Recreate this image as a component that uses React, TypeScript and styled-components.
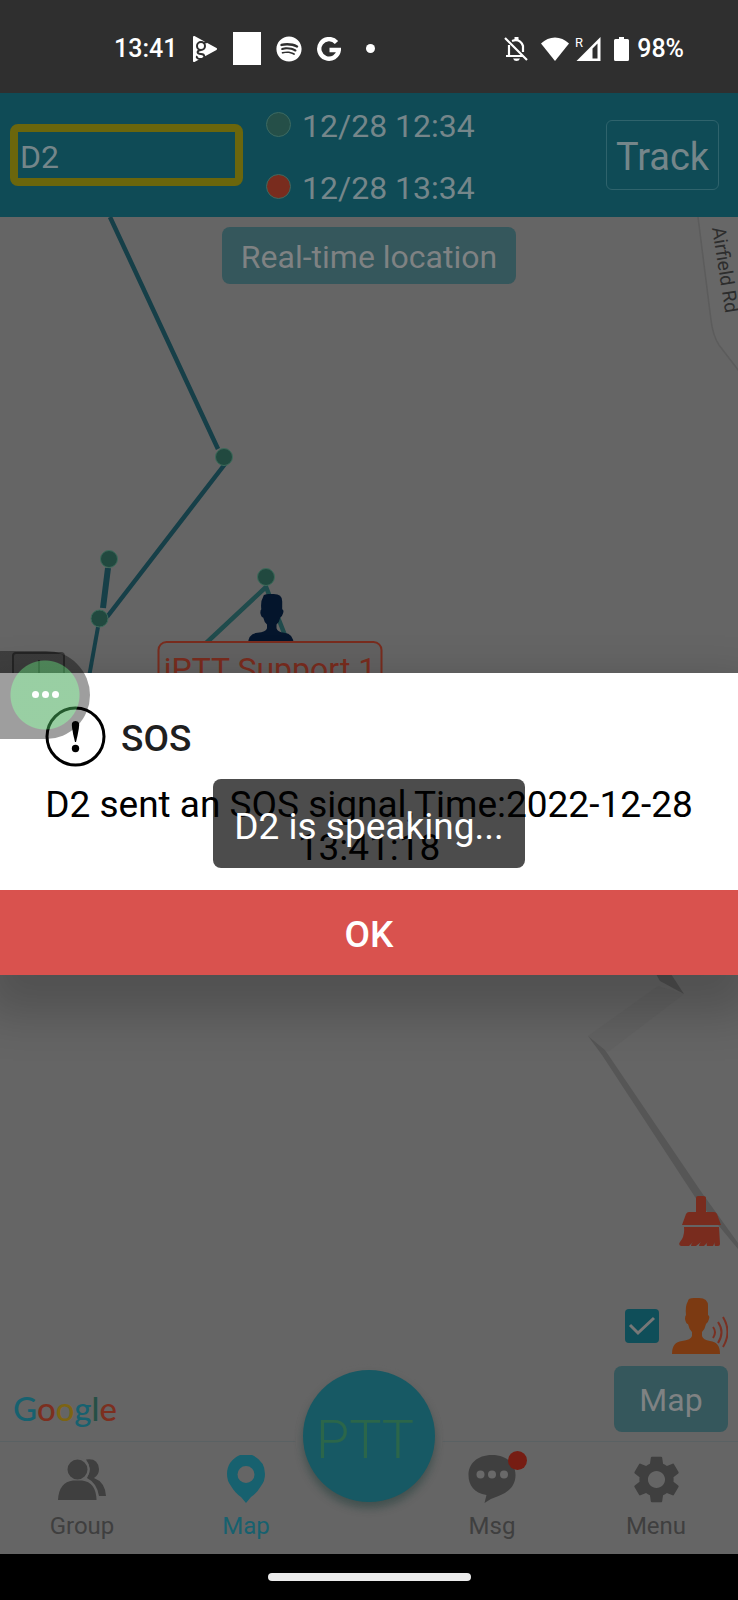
import React from 'react';
import styled, { createGlobalStyle } from 'styled-components';
import { FaSpotify } from 'react-icons/fa';
import { MdSettings } from 'react-icons/md';

const color = {
  map: '#656565',
  header: '#0f4b56',
  headerText: '#75868a',
  track: '#163f48',
  node: '#21493f',
  accent: '#17616f',
  grey: '#3f3f3f',
  red: '#792c1e',
};

const GlobalStyle = createGlobalStyle`
  * { box-sizing: border-box; }
  body { margin: 0; background: #000; font-family: Roboto, "Liberation Sans", sans-serif; }
  button, input { font: inherit; margin: 0; }
  button { padding: 0; border: 0; background: none; cursor: pointer; }
`;

const Page = styled.div`
  display: flex;
  flex-direction: column;
  min-height: 100vh;
`;

/* ---------- status bar ---------- */
const StatusBar = styled.div`
  display: flex;
  align-items: center;
  justify-content: space-between;
  height: 93px;
  padding: 4px 54px 0 114px;
  background: #2f2f2f;
  color: #fff;
  font-size: 25px;
  font-weight: 500;
`;

const StatusGroup = styled.div<{ $gap: number }>`
  display: flex;
  align-items: center;
  gap: ${(p) => p.$gap}px;

  svg { display: block; }
`;

const WhiteSquare = styled.span`
  width: 28px;
  height: 33px;
  background: #fff;
`;

const StatusDot = styled.span`
  width: 9px;
  height: 9px;
  margin-left: 10px;
  border-radius: 50%;
  background: #fff;
`;

const BatteryGroup = styled.span`
  display: flex;
  align-items: center;
  gap: 8px;
`;

/* ---------- header ---------- */
const Screen = styled.div`
  position: relative;
  display: flex;
  flex: 1;
  flex-direction: column;
`;

const Header = styled.header`
  display: flex;
  align-items: center;
  height: 124px;
  padding: 0 19px 0 10px;
  background: ${color.header};
  color: ${color.headerText};
`;

const UserInput = styled.input`
  width: 233px;
  height: 62px;
  padding: 3px 2px 0;
  border: 8px solid #6b660c;
  border-radius: 8px;
  outline: 0;
  background: transparent;
  color: inherit;
  font-size: 32px;
`;

const TimeList = styled.div`
  display: flex;
  flex: 1;
  flex-direction: column;
  margin-left: 23px;
`;

const TimeRow = styled.div`
  display: flex;
  align-items: center;
  gap: 11px;
  height: 62px;
  font-size: 32px;
  line-height: 38px;
`;

const TimeText = styled.time`
  padding-top: 3px;
`;

const TimeDot = styled.span<{ $fill: string }>`
  width: 25px;
  height: 25px;
  border: 1px solid #3c6a62;
  border-radius: 50%;
  background: ${(p) => p.$fill};
`;

const TrackButton = styled.button`
  width: 113px;
  height: 70px;
  padding-top: 4px;
  border: 1px solid #2f636c;
  border-radius: 6px;
  color: ${color.headerText};
  font-size: 38px;
`;

/* ---------- map ---------- */
const MapArea = styled.main`
  position: relative;
  display: flex;
  flex: 1;
  flex-direction: column;
  align-items: center;
  justify-content: space-between;
  min-height: 900px;
  overflow: hidden;
  background: ${color.map};
`;

const MapCanvas = styled.svg`
  position: absolute;
  inset: 0;
  width: 100%;
  height: 100%;
`;

const MapButton = styled.button<{ $size: 'wide' | 'small' }>`
  position: relative;
  width: ${(p) => (p.$size === 'wide' ? 294 : 114)}px;
  height: ${(p) => (p.$size === 'wide' ? 57 : 66)}px;
  margin-top: ${(p) => (p.$size === 'wide' ? 10 : 12)}px;
  padding-top: 2px;
  border-radius: 8px;
  background: #35575c;
  color: #7f8283;
  font-size: 32px;
`;

const MapFooter = styled.div`
  position: relative;
  display: flex;
  align-items: flex-end;
  justify-content: space-between;
  width: 100%;
  padding: 0 10px 9px 13px;
`;

const GoogleMark = styled.div`
  font-family: Lato, sans-serif;
  font-size: 33px;
  font-weight: 500;
  line-height: 48px;
`;

const Letter = styled.span<{ $c: string }>`
  color: ${(p) => p.$c};
`;

const Tools = styled.div`
  display: flex;
  flex-direction: column;
  align-items: flex-end;

  svg { display: block; }
`;

const BroomButton = styled.button`
  margin: 0 7px 52px 0;
`;

const VoiceRow = styled.label`
  display: flex;
  align-items: center;
  gap: 13px;
`;

const VoiceCheck = styled.input`
  appearance: none;
  width: 34px;
  height: 34px;
  border-radius: 4px;
  background: #0f4e59 url("data:image/svg+xml,%3Csvg xmlns='http://www.w3.org/2000/svg' viewBox='0 0 34 34'%3E%3Cpath d='M5 16l8 8L29 9' fill='none' stroke='%23777' stroke-width='3'/%3E%3C/svg%3E") center / cover;
`;

/* ---------- tab bar ---------- */
const TabBar = styled.nav`
  position: relative;
  display: flex;
  height: 113px;
  border-top: 1px solid #5a6163;
  background: ${color.map};
`;

const Tab = styled.button<{ $active?: boolean }>`
  display: flex;
  flex: 2;
  flex-direction: column;
  align-items: center;
  gap: 9px;
  padding-top: 13px;
  color: ${(p) => (p.$active ? color.accent : color.grey)};
  font-size: 24px;
  line-height: 28px;

  svg { display: block; flex-shrink: 0; }
`;

const TabIcon = styled.span`
  position: relative;
  display: flex;
  align-items: center;
  justify-content: center;
  width: 48px;
  height: 48px;
`;

const Badge = styled.span`
  position: absolute;
  top: -4px;
  right: -11px;
  width: 19px;
  height: 19px;
  border-radius: 50%;
  background: #761d13;
`;

const TabSpacer = styled.div`
  flex: 1;
`;

const PttRing = styled.div`
  position: absolute;
  top: -78px;
  left: 50%;
  padding: 6px 8px;
  border-radius: 50%;
  background: ${color.map};
  transform: translateX(-50%);
`;

const PttButton = styled.button`
  display: block;
  width: 132px;
  height: 132px;
  padding: 6px 8px 0 0;
  border-radius: 50%;
  background: #175964;
  box-shadow: 0 6px 8px rgba(10, 50, 45, 0.4);
  color: #2b664a;
  font-size: 54px;
  font-weight: 300;
`;

const HomeBar = styled.div`
  display: flex;
  align-items: center;
  justify-content: center;
  height: 46px;
  background: #000;

  &::after {
    width: 203px;
    height: 8px;
    border-radius: 4px;
    background: #ebebeb;
    content: '';
  }
`;

/* ---------- overlays ---------- */
const Overlay = styled.div`
  position: absolute;
  inset: 0;
  display: flex;
  align-items: center;
  overflow: hidden;
`;

const Dialog = styled.section`
  width: 100%;
  background: #fff;
  box-shadow: 0 24px 44px 16px rgba(0, 0, 0, 0.2);
`;

const DialogBody = styled.div`
  padding: 34px 40px 21px;
`;

const DialogTitle = styled.h2`
  display: flex;
  align-items: center;
  gap: 15px;
  height: 60px;
  margin: 0 0 16px;
  padding-left: 5px;
  color: #1f1f1f;
  font-size: 37px;
  font-weight: 500;
`;

const TitleText = styled.span`
  padding-top: 4px;
`;

const DialogText = styled.p`
  margin: 0;
  color: #000;
  font-size: 37px;
  line-height: 43px;
  text-align: center;
`;

const OkButton = styled.button`
  display: block;
  width: 100%;
  height: 85px;
  padding-top: 4px;
  background: #d9524e;
  color: #fff;
  font-size: 37px;
  font-weight: 500;
`;

const ToastLayer = styled(Overlay)`
  justify-content: center;
  pointer-events: none;
`;

const Toast = styled.div`
  padding: 26px 21px 20px;
  border-radius: 8px;
  background: rgba(0, 0, 0, 0.7);
  color: #fff;
  font-size: 37px;
  line-height: 43px;
`;

const Bubble = styled.button`
  position: absolute;
  top: calc(50% - 173px);
  left: 0;
  display: flex;
  align-items: center;
  gap: 3px;
  width: 90px;
  height: 88px;
  padding-left: 32px;
  border-radius: 0 44px 44px 0;
  background: radial-gradient(
    circle at 45px 44px,
    rgba(66, 166, 85, 0.54) 34px,
    rgba(0, 0, 0, 0.38) 35px
  );
`;

const BubbleDot = styled.span`
  width: 7px;
  height: 7px;
  border-radius: 50%;
  background: #fff;
`;

/* ---------- icons ---------- */
const PlayGamesIcon = () => (
  <svg width="26" height="28" viewBox="0 0 26 28" aria-hidden="true">
    <path d="M2 2l22 12L2 26z" fill="#fff" stroke="#fff" strokeWidth="2" strokeLinejoin="round" />
    <circle cx="9" cy="11" r="4" fill="none" stroke="#2f2f2f" strokeWidth="2" />
    <path d="M9 15c-5 1-4 4 0 4s5 5 0 5c-3 0-5-1-4-3M11 8l4-1" fill="none" stroke="#2f2f2f" strokeWidth="2" />
  </svg>
);

const GIcon = () => (
  <svg width="24" height="24" viewBox="0 0 24 24" aria-hidden="true">
    <path d="M19.5 5.5A9.8 9.8 0 1 0 21.8 13H12.5" fill="none" stroke="#fff" strokeWidth="4.4" />
  </svg>
);

const BellOffIcon = () => (
  <svg width="24" height="25" viewBox="0 0 24 25" fill="none" stroke="#fff" strokeWidth="2.2" aria-hidden="true">
    <path d="M1 2l22 22M8 5q8-3 11 5v6M5 9v10M2 20h17" />
    <path d="M12.500 4V1" strokeWidth="4" />
    <path d="M9 22.500h7q-1 2.500-3.500 2.500T9 22.500z" fill="#fff" stroke="none" />
  </svg>
);

const WifiIcon = () => (
  <svg width="28" height="24" viewBox="0 0 28 24" aria-hidden="true">
    <path d="M0 6.500C8-1.500 20-1.500 28 6.500L14 24z" fill="#fff" />
  </svg>
);

const SignalIcon = () => (
  <svg width="26" height="26" viewBox="0 0 26 26" aria-hidden="true">
    <path d="M1.500 25L25.500 1v24zM17.500 12.500V22.500h5V7.500z" fill="#fff" fillRule="evenodd" />
    <text x="0" y="11" fontSize="13" fontWeight="400" fill="#fff">R</text>
  </svg>
);

const BatteryIcon = () => (
  <svg width="15" height="24" viewBox="0 0 15 24" aria-hidden="true">
    <path d="M5 0h5v2h3.500q1.500 0 1.500 1.500v19q0 1.500-1.500 1.500h-12Q0 24 0 22.500v-19Q0 2 1.500 2H5z" fill="#fff" />
  </svg>
);

const BroomIcon = () => (
  <svg width="42" height="50" viewBox="0 0 42 50" aria-hidden="true">
    <path
      d="M17 2q0-2 2-2h5q3 0 3 2v14h8q2 0 3 2l4 11H3l4-11q1-2 3-2h7zM5 31h35l1 17q0 2-2 2h-3q-1-2 0-4l-2 4h-6q-1-2 1-4l-4 4h-5q0-2 2-4l-5 4h-5q0-2 2-4l-4 4H2q-3-1-1-4 5-6 4-15z"
      fill={color.red}
    />
  </svg>
);

const personPath =
  'M16 3q0-3 6-3h5q9 0 9 8v9q2 1 1 4-1 4-3 5-1 5-4 8v4q1 4 8 5 10 1 10 13H0q0-12 10-13 9-1 10-5v-4q-3-3-4-8-2 0-3-5 0-3 1-4-1-9 2-14z';

const SpeakerPersonIcon = () => (
  <svg width="56" height="56" viewBox="0 0 56 56" aria-hidden="true">
    <path d={personPath} fill="#7c3a12" />
    <path d="M41 29q4 5 0 11M46 24q7 10 0 21M51 19q9 15 0 30" fill="none" stroke="#7a3022" strokeWidth="2" />
  </svg>
);

const GroupIcon = () => (
  <svg width="48" height="48" viewBox="0 0 48 48" fill="currentColor" aria-hidden="true">
    <path d="M28 4.500q12-2 13 9.500 0 6-5 9 11 4 12 18h-7q-2-13-12-18 6-9-1-18.500z" />
    <circle cx="19.500" cy="14.500" r="11" stroke={color.map} strokeWidth="2" />
    <path d="M0 45q1-18 15-19.500h9Q38 27 38.500 45z" />
  </svg>
);

const PinIcon = () => (
  <svg width="40" height="48" viewBox="0 0 40 48" fill="currentColor" aria-hidden="true">
    <path
      fillRule="evenodd"
      d="M14 0h12q13 6 13 19 0 7-4 12-4 7-10 11l-5 6-5-6Q9 38 5 31 1 26 1 19 1 6 14 0zM20 11a8.500 8.500 0 1 0 0 17 8.500 8.500 0 1 0 0-17z"
    />
  </svg>
);

const MsgIcon = () => (
  <svg width="48" height="48" viewBox="0 0 48 48" aria-hidden="true">
    <path d="M24 0C39 0 47.500 9 47.500 20c0 11-7 17-17 21q-7 2-14 7l2-8C6 38 .5 30 .5 20 .5 9 9 0 24 0z" fill="currentColor" />
    <g fill="#696969">
      <circle cx="12.500" cy="19.500" r="4" />
      <circle cx="24" cy="19.500" r="4" />
      <circle cx="36" cy="19.500" r="4" />
    </g>
  </svg>
);

const AlertIcon = () => (
  <svg width="61" height="61" viewBox="0 0 61 61" aria-hidden="true">
    <circle cx="30.500" cy="30.500" r="28.500" fill="none" stroke="#000" strokeWidth="3" />
    <path d="M27 17q1-2 3.500-2t3.500 2q1 3-3 19h-1q-4-16-3-19z" />
    <circle cx="30.500" cy="42.500" r="3.700" />
  </svg>
);

const nodes = [
  [224, 240],
  [109, 342],
  [99.5, 401.5],
  [266, 360],
];

const MapDrawing = () => (
  <MapCanvas viewBox="0 0 738 1224" preserveAspectRatio="xMidYMin slice" aria-label="Track map">
    <path d="M698 0l13 103q2 16 8 25l20 26V0z" fill="#676767" />
    <path d="M698 0l13 103q2 16 8 25l20 26" fill="none" stroke="#5c5c5c" strokeWidth="1.5" />
    <text transform="translate(712 11) rotate(81)" fontSize="19" fill="#2d2d2d">Airfield Rd</text>

    <path d="M588 819l70-50 26 8-76 58z" fill="#626262" />
    <path d="M656 757h15l13 20-24-13z" fill="#505050" />
    <path d="M588 819l17 14 97 143 36 50v6l-43-52-93-142z" fill="#565656" />

    <g fill="none" stroke={color.track} strokeWidth="4.5">
      <path d="M110 0l108 232M225 247L107 400" />
      <path d="M108 351l-5 40" strokeWidth="6" />
      <path d="M98 410l-9 50" strokeWidth="4" />
      <path d="M204 428l62-58 22 56" stroke="#1f4b4c" />
    </g>
    {nodes.map(([x, y]) => (
      <circle key={x} cx={x} cy={y} r="8.5" fill={color.node} stroke="#3c6a5a" strokeWidth="1" />
    ))}

    <path transform="translate(248 377) scale(0.95 0.9)" d={personPath} fill="#04152c" />
    <rect x="158.5" y="425" width="223" height="60" rx="8" fill="#626161" stroke={color.red} strokeWidth="2" />
    <text x="270" y="463" fontSize="32" textAnchor="middle" fill={color.red}>iPTT Support 1</text>

    <g fill="#5e5e5e" stroke="#3a3a3a" strokeWidth="2">
      <rect x="13" y="436" width="51" height="40" rx="3" />
      <path d="M39 443v30" />
    </g>
  </MapCanvas>
);

export default function App() {
  return (
    <Page>
      <GlobalStyle />
      <StatusBar>
        <StatusGroup $gap={15}>
          <span>13:41</span>
          <PlayGamesIcon />
          <WhiteSquare />
          <FaSpotify size={26} />
          <GIcon />
          <StatusDot />
        </StatusGroup>
        <StatusGroup $gap={13}>
          <BellOffIcon />
          <StatusGroup $gap={6}>
            <WifiIcon />
            <SignalIcon />
          </StatusGroup>
          <BatteryGroup>
            <BatteryIcon />
            <span>98%</span>
          </BatteryGroup>
        </StatusGroup>
      </StatusBar>

      <Screen>
        <Header>
          <UserInput aria-label="User" defaultValue="D2" />
          <TimeList>
            <TimeRow><TimeDot $fill="#254f48" /><TimeText>12/28 12:34</TimeText></TimeRow>
            <TimeRow><TimeDot $fill="#792c1e" /><TimeText>12/28 13:34</TimeText></TimeRow>
          </TimeList>
          <TrackButton>Track</TrackButton>
        </Header>

        <MapArea>
          <MapDrawing />
          <MapButton $size="wide">Real-time location</MapButton>
          <MapFooter>
            <GoogleMark>
              <Letter $c="#17616f">G</Letter>
              <Letter $c="#7c2f1f">o</Letter>
              <Letter $c="#7d6413">o</Letter>
              <Letter $c="#17616f">g</Letter>
              <Letter $c="#254f45">l</Letter>
              <Letter $c="#7c2f1f">e</Letter>
            </GoogleMark>
            <Tools>
              <BroomButton aria-label="Clear track"><BroomIcon /></BroomButton>
              <VoiceRow aria-label="Voice location">
                <VoiceCheck type="checkbox" aria-label="Voice location" defaultChecked />
                <SpeakerPersonIcon />
              </VoiceRow>
              <MapButton $size="small">Map</MapButton>
            </Tools>
          </MapFooter>
        </MapArea>

        <TabBar>
          <Tab><TabIcon><GroupIcon /></TabIcon>Group</Tab>
          <Tab $active><TabIcon><PinIcon /></TabIcon>Map</Tab>
          <TabSpacer />
          <Tab><TabIcon><MsgIcon /><Badge /></TabIcon>Msg</Tab>
          <Tab><TabIcon><MdSettings size={57} /></TabIcon>Menu</Tab>
          <PttRing><PttButton>PTT</PttButton></PttRing>
        </TabBar>

        <Overlay>
          <Dialog role="alertdialog" aria-labelledby="sos-title">
            <DialogBody>
              <DialogTitle id="sos-title"><AlertIcon /><TitleText>SOS</TitleText></DialogTitle>
              <DialogText>D2 sent an SOS signal,Time:2022-12-28 13:41:18</DialogText>
            </DialogBody>
            <OkButton>OK</OkButton>
          </Dialog>
        </Overlay>
        <ToastLayer>
          <Toast role="status">D2 is speaking...</Toast>
        </ToastLayer>
        <Bubble aria-label="More"><BubbleDot /><BubbleDot /><BubbleDot /></Bubble>
      </Screen>
      <HomeBar />
    </Page>
  );
}
